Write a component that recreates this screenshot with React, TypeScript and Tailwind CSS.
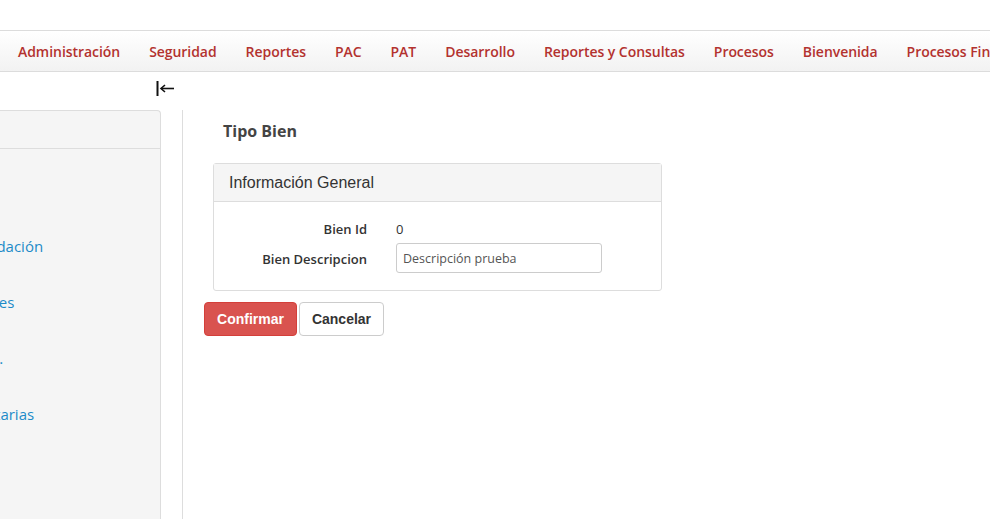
import React from 'react';

const menu = [
  'Administración',
  'Seguridad',
  'Reportes',
  'PAC',
  'PAT',
  'Desarrollo',
  'Reportes y Consultas',
  'Procesos',
  'Bienvenida',
  'Procesos Financieros',
];

// left part of each word is hidden behind the edge of the page
const sideLinks = [
  { label: 'Recaudación', shift: 'ml-[-46px]' },
  { label: 'Clases', shift: 'ml-[-30px]' },
  { label: 'Cat.', shift: 'ml-[-24px]' },
  { label: 'Partidas Presupuestarias', shift: 'ml-[-140px]' },
];

function CollapseIcon() {
  return (
    <svg width="19" height="15" viewBox="0 0 19 15" fill="none" stroke="#111" strokeWidth="2">
      <line x1="1.5" y1="0" x2="1.5" y2="15" />
      <line x1="5" y1="7.5" x2="18" y2="7.5" strokeWidth="1.6" />
      <polyline points="9,4 5,7.5 9,11" strokeWidth="1.6" fill="none" />
    </svg>
  );
}

export default function App() {
  return (
    <div className="w-[990px] h-[519px] overflow-hidden bg-white font-['Open_Sans',sans-serif]">
      <div className="h-[30px]" />

      <nav className="h-[42px] border-y border-[#dcdcdc] bg-gradient-to-b from-white to-[#f2f2f2] flex items-center pl-[18px] gap-[29px] whitespace-nowrap">
        {menu.map((item) => (
          <a key={item} className="text-[14px] font-semibold text-[#b3322f] tracking-[-0.05px]">
            {item}
          </a>
        ))}
      </nav>

      <div className="flex h-[447px]">
        <aside className="w-[182px] shrink-0 flex flex-col">
          <div className="h-[38px] flex items-start justify-end pr-[7px] pt-[9px]">
            <CollapseIcon />
          </div>
          <div className="w-[161px] flex-1 overflow-hidden">
            <div className="h-full bg-[#f5f5f5] border-t border-r border-[#dddddd] rounded-tr-[4px]">
              <div className="h-[38px] border-b border-[#dddddd]" />
              <ul className="pt-[86px] flex flex-col gap-[34px] text-[15px] text-[#1d8bc8]">
                {sideLinks.map((l) => (
                  <li key={l.label} className={`whitespace-nowrap leading-[22px] ${l.shift}`}>
                    {l.label}
                  </li>
                ))}
              </ul>
            </div>
          </div>
        </aside>

        <main className="flex-1 border-l border-[#dddddd] mt-[38px] pl-[21px]">
          <h1 className="ml-[19px] mt-[9px] text-[16px] font-bold text-[#444]">Tipo Bien</h1>

          <section className="ml-[9px] mt-[20px] w-[449px] border border-[#dddddd] rounded-[3px]">
            <div className="h-[38px] bg-[#f5f5f5] border-b border-[#dddddd] flex items-center pl-[15px] font-['Liberation_Sans',Arial,sans-serif] text-[16px] text-[#333]">
              Información General
            </div>
            <div className="pt-[17px] pb-[17px] text-[13px] text-[#333]">
              <div className="flex items-center h-[22px]">
                <label className="w-[153px] text-right font-semibold">Bien Id</label>
                <span className="ml-[29px]">0</span>
              </div>
              <div className="flex items-center mt-[2px]">
                <label className="w-[153px] text-right font-semibold pt-[3px]">Bien Descripcion</label>
                <input
                  readOnly
                  value="Descripción prueba"
                  className="ml-[29px] w-[206px] h-[30px] border border-[#cccccc] rounded-[3px] px-[6px] text-[12.5px] text-[#555] outline-none"
                />
              </div>
            </div>
          </section>

          <div className="mt-[11px] flex gap-[2px] font-['Liberation_Sans',Arial,sans-serif] text-[14px] font-bold">
            <button className="h-[34px] w-[93px] bg-[#d9534f] border border-[#d43f3a] rounded-[4px] text-white">
              Confirmar
            </button>
            <button className="h-[34px] w-[85px] bg-white border border-[#cccccc] rounded-[4px] text-[#333]">
              Cancelar
            </button>
          </div>
        </main>
      </div>
    </div>
  );
}
